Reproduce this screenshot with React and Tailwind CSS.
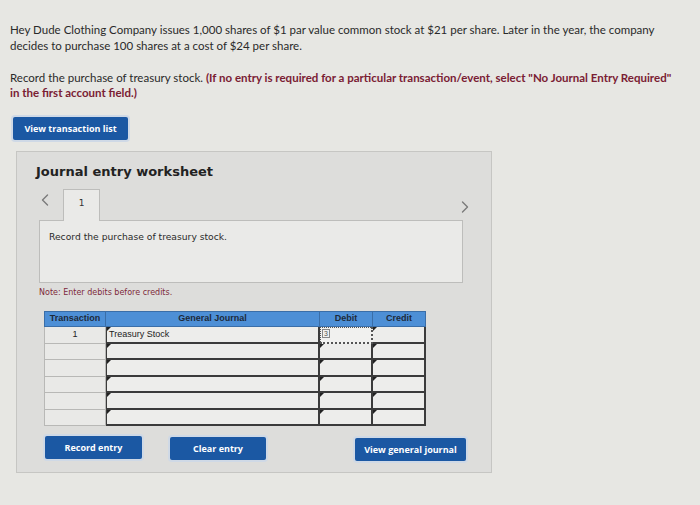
import React from 'react';

const Marker = () => (
    <span className="absolute left-0 top-0 h-0 w-0 border-l-[4px] border-b-[4px] border-l-[#222] border-b-transparent" />
);

const Chevron = ({ dir }) => (
    <svg width="8" height="12" viewBox="0 0 8 12" fill="none">
        <path
            d={dir === 'left' ? 'M6.5 1L1.5 6l5 5' : 'M1.5 1l5 5-5 5'}
            stroke="#7a7a7a"
            strokeWidth="1.4"
            strokeLinecap="round"
            strokeLinejoin="round"
        />
    </svg>
);

const rows = [
    { tx: '1', account: 'Treasury Stock', focus: true },
    { tx: '', account: '' },
    { tx: '', account: '' },
    { tx: '', account: '' },
    { tx: '', account: '' },
    { tx: '', account: '' },
];

const BlueButton = ({ children, className = '' }) => (
    <button
        className={`flex items-center justify-center bg-[#1b58a3] text-white font-bold text-[9px] rounded-[2px] shadow-[0_0_0_2px_#cfd9e6] ${className}`}
        style={{ fontFamily: '"Open Sans", "Liberation Sans", sans-serif' }}
    >
        {children}
    </button>
);

const App = () => {
    return (
        <div
            className="w-[700px] h-[505px] overflow-hidden bg-[#e7e7e3] pl-[10px] pt-[22px] text-[#2a2a2a]"
            style={{ fontFamily: 'Lato, "Liberation Sans", sans-serif' }}
        >
            <p className="w-[660px] text-[11.5px] leading-[16px]">
                Hey Dude Clothing Company issues 1,000 shares of $1 par value common stock at $21 per share. Later in the year, the company decides to purchase 100 shares at a cost of $24 per share.
            </p>
            <p className="mt-[16px] w-[668px] text-[11.5px] leading-[15px]">
                Record the purchase of treasury stock.{' '}
                <b className="text-[#7a2033]">
                    (If no entry is required for a particular transaction/event, select "No Journal Entry Required" in the first account field.)
                </b>
            </p>

            <BlueButton className="mt-[17px] ml-[3px] h-[23px] w-[115px]">View transaction list</BlueButton>

            <div className="mt-[11px] ml-[6px] w-[476px] h-[322px] border border-[#c6c6c3] bg-[#dddddb] pl-[22px] pt-[11px]">
                <h2
                    className="-ml-[3px] text-[13px] font-bold text-[#222] leading-[18px]"
                    style={{ fontFamily: '"DejaVu Sans", Verdana, sans-serif' }}
                >
                    Journal entry worksheet
                </h2>

                <div className="mt-[8px] flex w-[430px] items-end">
                    <span className="mb-[14px] ml-[2px] w-[22px]">
                        <Chevron dir="left" />
                    </span>
                    <div
                        className="relative z-10 -mb-px flex h-[32px] w-[37px] justify-center border border-b-0 border-[#bdbdbb] bg-[#eaeae8] pt-[7px] text-[9px] text-[#333]"
                        style={{ fontFamily: '"DejaVu Sans", Verdana, sans-serif' }}
                    >
                        1
                    </div>
                    <span className="mb-[7px] ml-auto">
                        <Chevron dir="right" />
                    </span>
                </div>

                <div
                    className="h-[63px] w-[424px] border border-[#bdbdbb] bg-[#eaeae8] pl-[9px] pt-[9px] text-[9.2px] text-[#2a2a2a]"
                    style={{ fontFamily: '"DejaVu Sans", Verdana, sans-serif' }}
                >
                    Record the purchase of treasury stock.
                </div>

                <p
                    className="mt-[4px] text-[8px] text-[#7d2a3a]"
                    style={{ fontFamily: '"DejaVu Sans", Verdana, sans-serif' }}
                >
                    Note: Enter debits before credits.
                </p>

                <div
                    className="mt-[12px] ml-[5px] grid w-[382px] grid-cols-[62px_214px_53px_53px] text-[9px]"
                    style={{ fontFamily: '"Liberation Sans", Arial, sans-serif' }}
                >
                    <div className="flex h-[16px] items-center justify-center border border-[#3a6ea8] bg-[#4d8fd6] font-bold text-[#1d2a3a]">Transaction</div>
                    <div className="flex h-[16px] items-center justify-center border border-l-0 border-[#3a6ea8] bg-[#4d8fd6] font-bold text-[#1d2a3a]">General Journal</div>
                    <div className="flex h-[16px] items-center justify-center border border-l-0 border-[#3a6ea8] bg-[#4d8fd6] font-bold text-[#1d2a3a]">Debit</div>
                    <div className="flex h-[16px] items-center justify-center border border-l-0 border-[#3a6ea8] bg-[#4d8fd6] font-bold text-[#1d2a3a]">Credit</div>

                    {rows.map((r, i) => (
                        <React.Fragment key={i}>
                            <div className="flex h-[16.5px] items-center justify-center border border-t-0 border-[#b8b8b6] bg-[#e9e9e7] text-[#222]">{r.tx}</div>
                            <div className="relative flex h-[16.5px] items-center border-2 border-t-0 border-l-[1.5px] border-[#3b3b3b] bg-[#ededeb] pl-[2px] text-[#222]">
                                <Marker />
                                {r.account}
                            </div>
                            {r.focus ? (
                                <div className="relative h-[16.5px] border-2 border-l-[1.5px] border-t-[1.5px] border-dotted border-[#555] bg-[#f1f1ef]">
                                    <span className="absolute left-[1px] top-[1px] border border-[#888] px-[1px] text-[7px] leading-none text-[#555]">3</span>
                                </div>
                            ) : (
                                <div className="relative h-[16.5px] border-b-2 border-r-2 border-[#3b3b3b] bg-[#ededeb]">
                                    <Marker />
                                </div>
                            )}
                            <div className="relative h-[16.5px] border-b-2 border-r-2 border-[#3b3b3b] bg-[#ededeb]">
                                <Marker />
                            </div>
                        </React.Fragment>
                    ))}
                </div>

                <div className="mt-[10px] ml-[6px] flex items-start">
                    <BlueButton className="h-[23px] w-[97px]">Record entry</BlueButton>
                    <BlueButton className="ml-[28px] mt-[1px] h-[23px] w-[96px]">Clear entry</BlueButton>
                    <BlueButton className="ml-[89px] mt-[2px] h-[23px] w-[111px]">View general journal</BlueButton>
                </div>
            </div>
        </div>
    );
};

export default App;
